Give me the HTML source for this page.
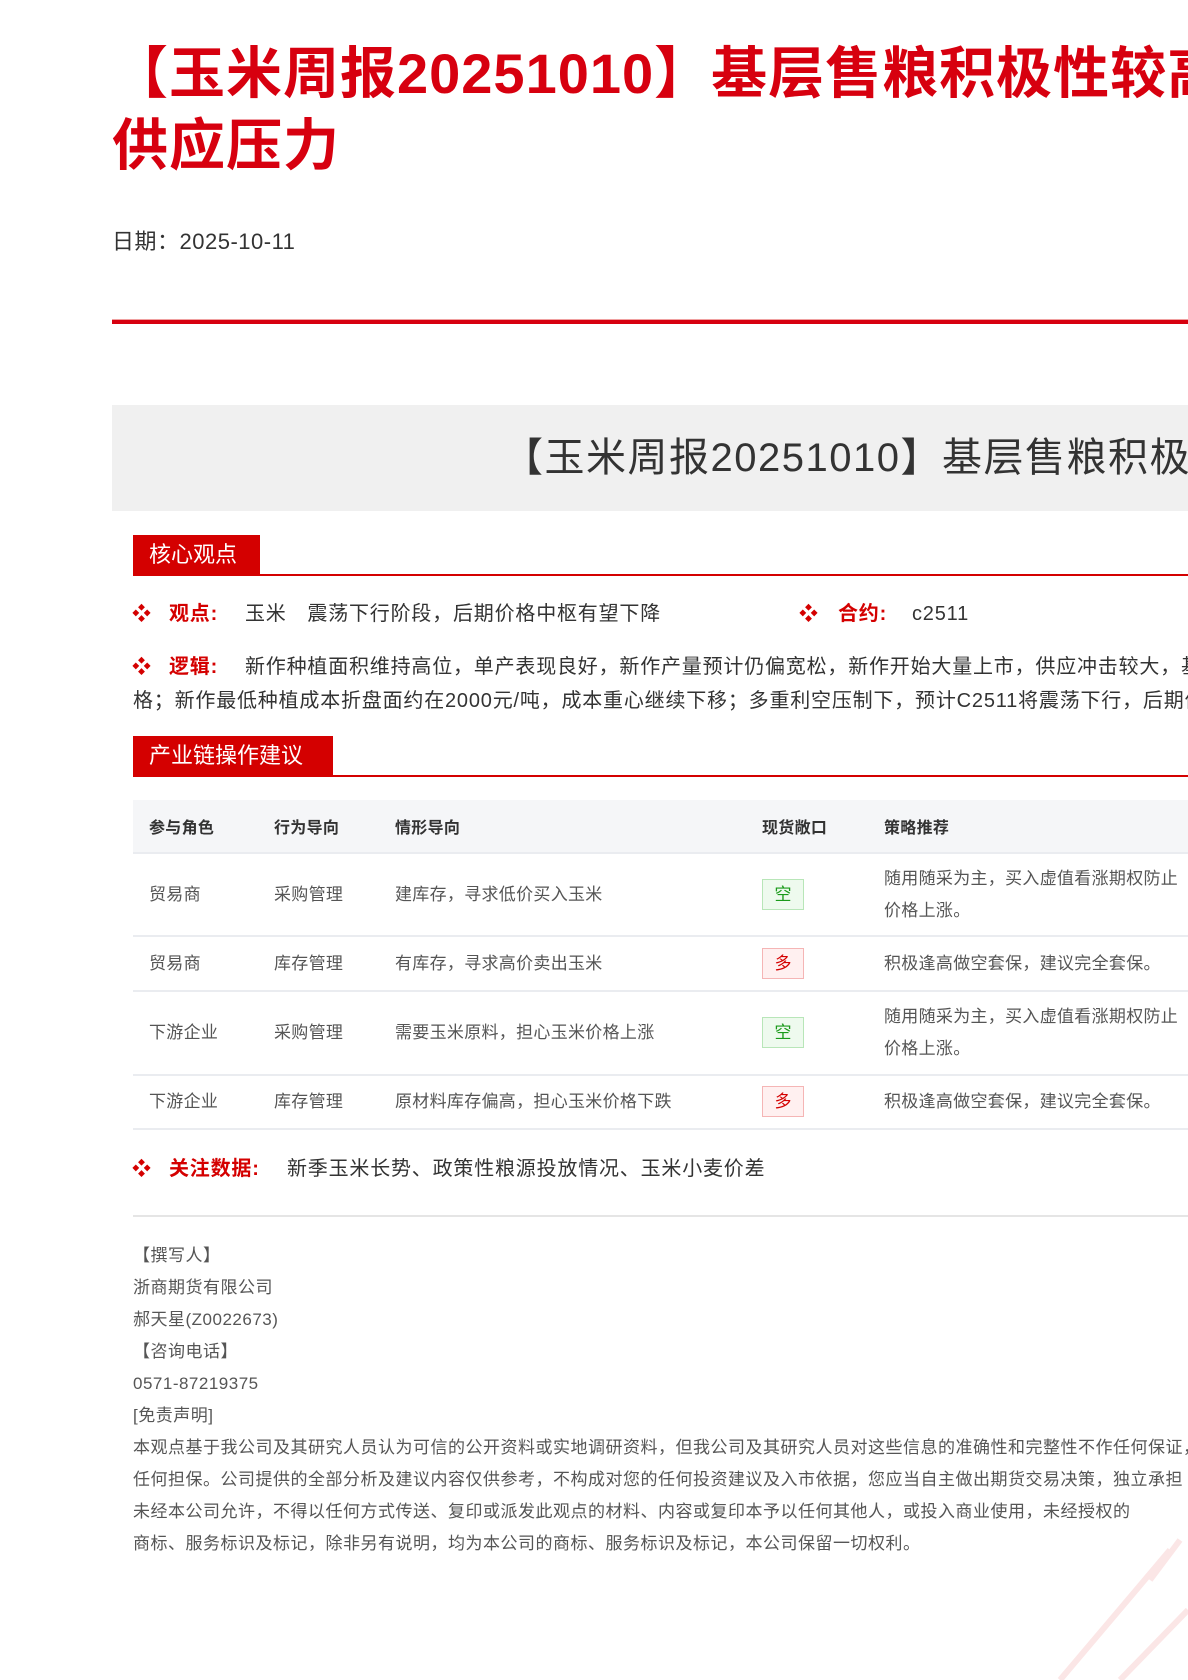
<!DOCTYPE html>
<html><head><meta charset="utf-8">
<style>
*{margin:0;padding:0;box-sizing:border-box}
html,body{width:1188px;height:1680px;overflow:hidden;background:#fff}
body{font-family:"Liberation Sans","Noto Sans CJK SC",sans-serif;color:#333;position:relative}
.abs{position:absolute;white-space:nowrap}
h1{position:absolute;left:112px;top:38px;font-size:56px;line-height:72px;color:#d7000f;font-weight:bold;white-space:nowrap;letter-spacing:1px}
.date{left:112px;top:224px;font-size:22px;color:#333;letter-spacing:0.5px}
.redline{position:absolute;left:112px;top:319px;width:1200px;height:5px;background:#d7000f;border-top:1px solid #f0a0a0}
.gbox{position:absolute;left:112px;top:405px;width:1200px;height:106px;background:#f0f0f0}
.gbox span{position:absolute;left:391px;top:26px;font-size:40px;line-height:54px;color:#333;white-space:nowrap;letter-spacing:1.5px}
.tab{position:absolute;background:#d40000;color:#fff;font-size:22px;line-height:40px;padding-left:16px}
.tabline{position:absolute;left:133px;width:1100px;height:2px;background:#d40000}
.bul{position:absolute;font-size:20px;line-height:30px;white-space:nowrap;color:#333;letter-spacing:0.8px}
.bul b{color:#d40000;font-weight:bold}
.dot{color:#d40000;font-size:19px;position:absolute}
table{position:absolute;left:133px;top:800px;width:1200px;border-collapse:collapse;font-size:17px;color:#555;letter-spacing:0.3px}
th{background:#f5f6f8;height:53px;text-align:left;font-weight:bold;color:#333;font-size:16px;padding-left:16px;border-bottom:2px solid #eaecf0}
td{padding-left:16px;border-bottom:2px solid #eaecf0;line-height:32px;white-space:nowrap}
.bd{display:inline-block;width:42px;height:31px;line-height:29px;text-align:center;font-size:17px;border:1px solid;letter-spacing:0}
.g{color:#1a9a1a;background:#eefaee;border-color:#b8e6b8}
.r{color:#d40000;background:#fff0f0;border-color:#f5b5b5}
.foot{position:absolute;left:133px;top:1240px;font-size:17px;line-height:32px;color:#555;white-space:nowrap;letter-spacing:0.5px}
</style></head><body>
<h1>【玉米周报20251010】基层售粮积极性较高，关注新作<br>供应压力</h1>
<div class="abs date">日期：2025-10-11</div>
<div class="redline"></div>
<div class="gbox"><span>【玉米周报20251010】基层售粮积极性较高，关注新作上市供应压力</span></div>

<div class="tab" style="left:133px;top:535px;width:127px;">核心观点</div>
<div class="tabline" style="top:574px"></div>

<div class="dot" style="left:132px;top:599px">❖</div>
<div class="bul" style="left:169px;top:599px"><b>观点:</b></div>
<div class="bul" style="left:245px;top:599px">玉米　震荡下行阶段，后期价格中枢有望下降</div>
<div class="dot" style="left:799px;top:599px">❖</div>
<div class="bul" style="left:838px;top:599px"><b>合约:</b></div>
<div class="bul" style="left:912px;top:599px">c2511</div>

<div class="dot" style="left:132px;top:652px">❖</div>
<div class="bul" style="left:169px;top:652px"><b>逻辑:</b></div>
<div class="bul" style="left:245px;top:652px">新作种植面积维持高位，单产表现良好，新作产量预计仍偏宽松，新作开始大量上市，供应冲击较大，基层售粮压制价</div>
<div class="bul" style="left:133px;top:686px">格；新作最低种植成本折盘面约在2000元/吨，成本重心继续下移；多重利空压制下，预计C2511将震荡下行，后期价格中枢有望下降。</div>

<div class="tab" style="left:133px;top:736px;width:200px;">产业链操作建议</div>
<div class="tabline" style="top:775px"></div>

<table>
<colgroup><col style="width:125px"><col style="width:121px"><col style="width:367px"><col style="width:122px"><col></colgroup>
<tr><th>参与角色</th><th>行为导向</th><th>情形导向</th><th>现货敞口</th><th>策略推荐</th></tr>
<tr style="height:83px"><td>贸易商</td><td>采购管理</td><td>建库存，寻求低价买入玉米</td><td><span class="bd g">空</span></td><td>随用随采为主，买入虚值看涨期权防止<br>价格上涨。</td></tr>
<tr style="height:55px"><td>贸易商</td><td>库存管理</td><td>有库存，寻求高价卖出玉米</td><td><span class="bd r">多</span></td><td>积极逢高做空套保，建议完全套保。</td></tr>
<tr style="height:84px"><td>下游企业</td><td>采购管理</td><td>需要玉米原料，担心玉米价格上涨</td><td><span class="bd g">空</span></td><td>随用随采为主，买入虚值看涨期权防止<br>价格上涨。</td></tr>
<tr style="height:54px"><td>下游企业</td><td>库存管理</td><td>原材料库存偏高，担心玉米价格下跌</td><td><span class="bd r">多</span></td><td>积极逢高做空套保，建议完全套保。</td></tr>
</table>

<div class="dot" style="left:132px;top:1154px">❖</div>
<div class="bul" style="left:169px;top:1154px"><b>关注数据:</b></div>
<div class="bul" style="left:287px;top:1154px">新季玉米长势、政策性粮源投放情况、玉米小麦价差</div>

<div style="position:absolute;left:133px;top:1215px;width:1100px;height:2px;background:#e5e5e5"></div>

<div class="foot">【撰写人】<br>浙商期货有限公司<br>郝天星(Z0022673)<br>【咨询电话】<br>0571-87219375<br>[免责声明]<br>本观点基于我公司及其研究人员认为可信的公开资料或实地调研资料，但我公司及其研究人员对这些信息的准确性和完整性不作任何保证，<br>任何担保。公司提供的全部分析及建议内容仅供参考，不构成对您的任何投资建议及入市依据，您应当自主做出期货交易决策，独立承担<br>未经本公司允许，不得以任何方式传送、复印或派发此观点的材料、内容或复印本予以任何其他人，或投入商业使用，未经授权的<br>商标、服务标识及标记，除非另有说明，均为本公司的商标、服务标识及标记，本公司保留一切权利。</div>

<svg style="position:absolute;left:1000px;top:1520px" width="188" height="160"><path d="M60 160 L170 30 M120 160 L188 90 M150 60 L180 20" stroke="#fbe6e6" stroke-width="6" fill="none"/></svg>
</body></html>
